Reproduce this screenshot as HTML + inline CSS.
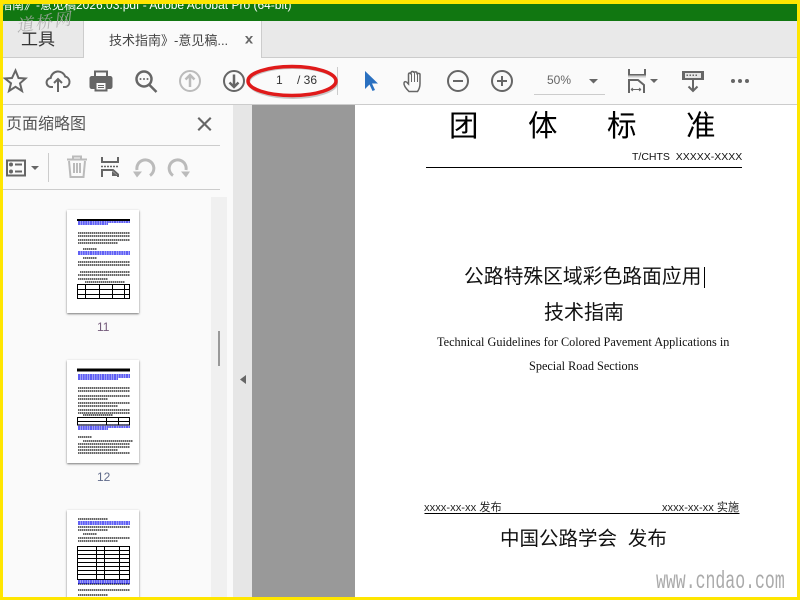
<!DOCTYPE html>
<html><head><meta charset="utf-8"><style>
html,body{margin:0;padding:0}
body{width:800px;height:600px;position:relative;overflow:hidden;background:#fff;font-family:"Liberation Sans","Noto Sans CJK SC",sans-serif}
.a{position:absolute;white-space:nowrap}
.s{font-family:"Liberation Serif","Noto Serif CJK SC",serif}
.c{font-family:"Liberation Sans","Noto Sans CJK SC",sans-serif;color:#111}
svg{position:absolute;left:0;top:0}
.t{position:absolute;background:#fff;box-shadow:0 1px 2px #777;width:72px}
</style></head><body>
<div class="a" style="left:3px;top:4px;width:794px;height:17px;background:#117711;overflow:hidden"></div>
<div class="a" style="left:0;top:-3px;color:#fff;font-size:12px;line-height:16px;">指南》-意见稿2026.03.pdf - Adobe Acrobat Pro (64-bit)</div>
<div class="a" style="left:3px;top:21px;width:794px;height:36px;background:#e9e9e9"></div>
<div class="a" style="left:83px;top:21px;width:179px;height:37px;background:#fafafa;border-left:1px solid #ccc;border-right:1px solid #ccc;box-sizing:border-box"></div>
<div class="a" style="left:3px;top:57px;width:80px;height:1px;background:#ccc"></div>
<div class="a" style="left:262px;top:57px;width:535px;height:1px;background:#ccc"></div>
<div class="a" style="left:21px;top:29px;font-size:17px;line-height:22px;color:#333">工具</div>
<div class="a" style="left:109px;top:31px;font-size:13px;line-height:19px;color:#444">技术指南》-意见稿...</div>
<div class="a" style="left:3px;top:58px;width:794px;height:46px;background:#fafafa;border-bottom:1px solid #ccc"></div>
<div class="a" style="left:3px;top:105px;width:230px;height:492px;background:#fafafa"></div>
<div class="a" style="left:211px;top:197px;width:16px;height:400px;background:#f0f0f0"></div>
<div class="a" style="left:218px;top:331px;width:2px;height:35px;background:#999"></div>
<div class="a" style="left:233px;top:105px;width:19px;height:492px;background:#e6e6e6"></div>
<div class="a" style="left:252px;top:105px;width:103px;height:492px;background:#999"></div>
<div class="a" style="left:355px;top:105px;width:442px;height:492px;background:#fff"></div>
<div class="a" style="left:6px;top:115px;font-size:16px;line-height:20px;color:#555">页面缩略图</div>
<div class="a" style="left:3px;top:145px;width:217px;height:1px;background:#ccc"></div>
<div class="a" style="left:3px;top:189px;width:217px;height:1px;background:#ccc"></div>
<div class="a" style="left:276px;top:73px;font-size:12px;line-height:15px;color:#333">1</div>
<div class="a" style="left:297px;top:73px;font-size:12px;line-height:15px;color:#333">/ 36</div>
<div class="a" style="left:547px;top:73px;font-size:12px;line-height:15px;color:#666">50%</div>
<div class="a" style="left:534px;top:94px;width:71px;height:1px;background:#ccc"></div>
<div class="a" style="left:337px;top:67px;width:1px;height:28px;background:#ccc"></div>
<div class="a t" style="left:67px;top:210px;height:103px"></div>
<div class="a t" style="left:67px;top:360px;height:103px"></div>
<div class="a t" style="left:67px;top:510px;height:90px"></div>
<div class="a" style="left:97px;top:320px;font-size:12px;line-height:15px;color:#735a7a">11</div>
<div class="a" style="left:97px;top:470px;font-size:12px;line-height:15px;color:#5f6a8a">12</div>
<svg width="800" height="600" viewBox="0 0 800 600" fill="none">
<g stroke="#666" stroke-width="2">
<path d="M15.500 70.500l3 7.500 7 .5-5.500 4.800 2 7.700-6.500-4.200-6.500 4.200 2-7.700L5 78.500l7-.5z"/>
<path d="M53 87h-1.500a4.500 4.500 0 0 1-.8-9 7.500 7.500 0 0 1 14.500-1.500 5.500 5.500 0 0 1 .8 10.500H63M58 92V79m-4 4 4-4 4 4" stroke-width="2"/>
<circle cx="144" cy="79" r="7.500" stroke-width="2.500"/><path d="M149.500 85l7 7" stroke-width="2.500"/>
<circle cx="234" cy="81" r="10"/><path d="M234 74.500V87m-4.500-4.500L234 87l4.500-4.500" stroke-width="2.500"/>
<circle cx="458" cy="81" r="10"/><path d="M453 81h10"/>
<circle cx="502" cy="81" r="10"/><path d="M497 81h10M502 76v10"/>
<path d="M409 91.500c-2-2-5.500-6-5-8.500.5-2 2.500-1.500 3.500 0l1 1V74.500c0-2 2.500-2 2.500 0V73c0-2 3-2 3 0v0c0-1.500 3-1.500 3 0v1.500c0-1.500 3-1.500 3 0v9c0 4-1 6-2.500 8z" stroke-width="1.500"/>
<path d="M411.500 74v8M414.500 73v9M417.500 74v8" stroke-width="1"/>
<path d="M629 69v6h16v-6" stroke-width="2"/>
<path d="M629 93V80h9l6 5v8" stroke-width="2"/>
<path d="M631 89.500h10M631 89.500l2-1.500M631 89.500l2 1.500M641 89.500l-2-1.500M641 89.500l-2 1.500" stroke-width="1"/>
<path d="M693 80v11m-4.500-4.500L693 91l4.500-4.500"/>
</g>
<path d="M628 76.500h18" stroke="#ccc" stroke-width="2"/>
<g stroke="#bbb" stroke-width="2">
<circle cx="190" cy="81" r="10"/><path d="M190 87V75m-4.500 4.500L190 75l4.500 4.500" stroke-width="2.500"/>
<path d="M69 161l1.500 16h13l1.500-16M67 159.500h20M73 159v-2.500h8v2.500M74 163v10M77 163v10M80 163v10" stroke-width="2"/>
<path d="M150 175.500A8.500 8.500 0 1 0 137 170" stroke-width="3"/>
<path d="M173 175.500A8.500 8.500 0 1 1 186 170" stroke-width="3"/>
</g>
<path d="M133 171.500h9l-5 6zM181 171.500h9l-4 6z" fill="#bbb"/>
<g fill="#666">
<path d="M94 76V70.500h14V76h2c1.500 0 2.500 1 2.500 2.500v8c0 1.500-1 2.500-2.500 2.500h-2.500v2.500H94.500V89H92c-1.500 0-2.500-1-2.500-2.500v-8C89.500 77 90.500 76 92 76zM96 76h10v-3.500H96zM96.500 83v6.500h9V83z" fill-rule="evenodd"/>
<path d="M98 85h6v1h-6zM98 87h6v1h-6z"/>
<circle cx="140.500" cy="79" r="1"/><circle cx="144" cy="79" r="1"/><circle cx="147.500" cy="79" r="1"/>
<path d="M589 79h9l-4.500 4.500zM650 79h8l-4 4zM31 166h8l-4 4z"/>
<circle cx="733" cy="81" r="2"/><circle cx="740" cy="81" r="2"/><circle cx="747" cy="81" r="2"/>
<path d="M682 71h22v9h-22z"/>
<path d="M685 73h16v5h-16z" fill="#e6e6e6"/>
<path d="M686.500 74.500h1.500v1.500h-1.500zM689.500 74.500h1.500v1.500h-1.500zM692.500 74.500h1.500v1.500h-1.500zM695.500 74.500h1.500v1.500h-1.500z"/>
<path d="M197.500 116.500l1.500-1.500 5.500 5.500 5.500-5.500 1.500 1.500-5.500 5.500 5.500 5.500-1.500 1.500-5.500-5.500-5.500 5.500-1.500-1.500 5.500-5.500z" transform="translate(0 2)"/>
<path d="M245 36h2.200l1.800 2.500 1.800-2.500h2.200l-2.900 3.800 2.900 3.700h-2.200l-1.800-2.400-1.800 2.400H245l2.900-3.700z"/>
<path d="M246 375v9l-6-4.500z"/>
</g>
<path d="M365 71v18l4.500-4.500 3 6.500 2.500-1-3-6.500h6z" fill="#2a70c0"/>
<g stroke="#666" stroke-width="2"><rect x="7" y="160.500" width="18" height="15"/><path d="M15 164.500h7M15 171.500h7"/>
<path d="M102 157v5h16v-5M102 177v-7h11l5 4.500v2.500" stroke-width="2"/></g>
<path d="M101 166.500h18" stroke="#666" stroke-width="1.500" stroke-dasharray="2 1"/>
<path d="M112 171v5h6z" fill="#666"/>
<g fill="#666"><circle cx="11" cy="164.500" r="2"/><circle cx="11" cy="171.500" r="2"/></g>
<path d="M48.500 153v29" stroke="#ccc"/>
<ellipse cx="293" cy="83" rx="44" ry="15" stroke="#888" stroke-width="2" opacity=".45"/>
<ellipse cx="292" cy="81" rx="44" ry="14.500" stroke="#e01a1a" stroke-width="3.500"/>
<g stroke="#333" stroke-width="1.400" stroke-dasharray="1.500 .5">
<path d="M78 233h52M78 236h52M78 240h52M78 243h40M83 249h14M83 258h14M78 262h52M78 265h52M80 272h50M78 275h52M78 279h30M85 282h40"/>
<path d="M78 388h52M78 391h52M78 396h52M78 399h30M78 403h52M78 406h40M78 410h52M78 413h52M83 415h30M78 437h14M83 441h50M78 444h52M78 447h52M78 450h40M78 453h52"/>
<path d="M78 519h30M78 527h52M78 530h30M83 534h14M78 538h52M78 541h40M78 584h52M78 590h52M78 595h30"/>
</g>
<g stroke="#0000ee" stroke-width="1.300" stroke-dasharray="2 .4">
<path d="M78 222h52M78 224h30M78 252h52M78 254h52"/>
<path d="M78 375h52M78 377h52M78 379h40M78 425h52M78 427h52M78 429h30"/>
<path d="M78 522h52M78 524h52M78 581h52M78 583h52"/>
</g>
<g stroke="#000" stroke-width="1">
<path d="M77 220h53" stroke-width="2"/><path d="M77 370h53" stroke-width="3"/>
<rect x="77.500" y="284.500" width="52" height="14"/><path d="M78 289.500h52M78 294.500h52M85.500 285v14M99.500 285v14M112.500 285v14M124.500 285v14" stroke-width="1"/>
<rect x="77.500" y="417.500" width="52" height="7.500"/><path d="M78 421.500h52M106.500 418v7M118.500 418v7"/>
<rect x="77.500" y="546.500" width="52" height="33"/><path d="M78 550.500h52M78 554.500h52M78 558.500h52M78 562.500h52M78 566.500h52M78 570.500h52M78 574.500h52M96.500 547v32M104.500 547v32M119.500 547v32"/>
</g>
<path d="M426 167.500h316M424.500 513.500h315" stroke="#000" stroke-width="1"/>
<path d="M704.500 267v21" stroke="#000" stroke-width="1"/>
</svg>
<div class="a c" style="left:449px;top:107px;font-size:29.500px;line-height:40px;letter-spacing:49.500px;color:#000">团体标准</div>
<div class="a" style="left:632px;top:150px;font-size:10.500px;line-height:14px;color:#111">T/CHTS&nbsp; XXXXX-XXXX</div>
<div class="a c" style="left:464px;top:264px;font-size:19.800px;line-height:26px">公路特殊区域彩色路面应用</div>
<div class="a c" style="left:544px;top:300px;font-size:20px;line-height:26px">技术指南</div>
<div class="a s" style="left:437px;top:334px;font-size:12.250px;line-height:16px;color:#111">Technical Guidelines for Colored Pavement Applications in</div>
<div class="a s" style="left:529px;top:358px;font-size:12.250px;line-height:16px;color:#111">Special Road Sections</div>
<div class="a" style="left:424px;top:501px;font-size:11.200px;line-height:14px;color:#222">xxxx-xx-xx 发布</div>
<div class="a" style="left:662px;top:501px;font-size:11.100px;line-height:14px;color:#222">xxxx-xx-xx 实施</div>
<div class="a c" style="left:500px;top:526px;font-size:19.500px;line-height:26px">中国公路学会&nbsp; 发布</div>
<div class="a" style="left:656px;top:567px;font-size:25px;line-height:30px;color:#aaa;transform:scaleX(.66);transform-origin:0 0;font-family:'Liberation Mono',monospace">www.cndao.com</div>
<div class="a s" style="left:16px;top:11px;font-size:17px;line-height:24px;color:#aaa;letter-spacing:2px;font-style:italic;transform:rotate(-8deg);opacity:.85">道桥网</div>
<div class="a" style="left:0;top:0;width:3px;height:600px;background:#ffe600"></div>
<div class="a" style="left:797px;top:0;width:3px;height:600px;background:#ffe600"></div>
<div class="a" style="left:0;top:0;width:800px;height:4px;background:#ffe600"></div>
<div class="a" style="left:0;top:597px;width:800px;height:3px;background:#ffe600"></div>
</body></html>
